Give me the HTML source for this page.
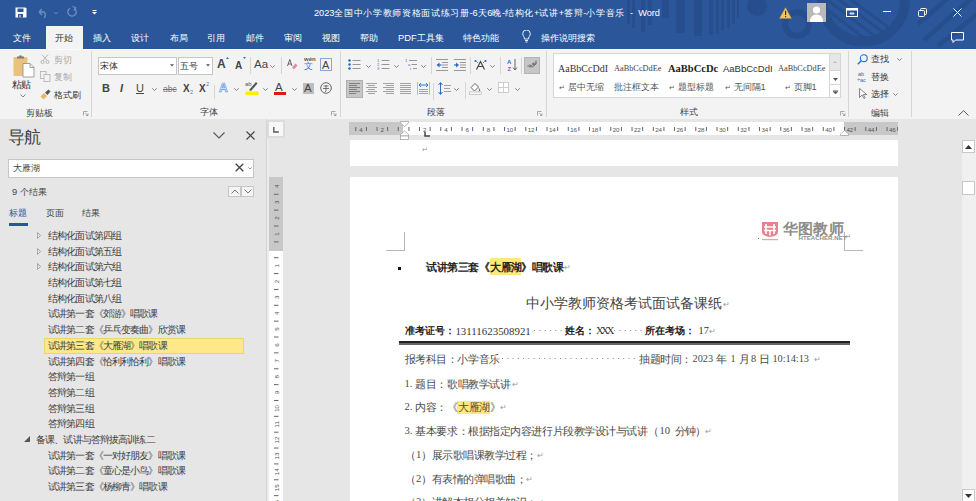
<!DOCTYPE html>
<html><head><meta charset="utf-8">
<style>
*{margin:0;padding:0;box-sizing:border-box}
i{font-style:normal;display:inline-block;width:var(--cw);font-family:"Liberation Sans",sans-serif}
html,body{width:976px;height:501px;overflow:hidden;background:#e6e6e6}
body{--cw:0.968em;position:relative;font-family:"Liberation Sans",sans-serif;font-size:9.3px;color:#444}
.a{position:absolute;white-space:nowrap}
#tb{left:0;top:0;width:976px;height:49px;background:#2b579a;overflow:hidden}
#rb{left:0;top:48px;width:976px;height:71px;background:#f3f3f3}
#nav{left:0;top:119px;width:266px;height:382px;background:#e6e6e6}
#doc{left:266px;top:119px;width:710px;height:382px;background:#e6e6e6}
.tab{top:32px;color:#fff;font-size:9.3px;line-height:12px}
.sep{width:1px;background:#d5d5d5}
.glab{top:107px;font-size:9.3px;color:#444;line-height:12px}
.ni{left:48px;font-size:9.6px;color:#3c3c3c;line-height:12px;--cw:9.125px}
.pm{color:#9a9a9a;font-size:7.5px;font-weight:normal;font-family:"Liberation Sans",sans-serif}.dots{color:#888;letter-spacing:2.6px}
.dt{--cw:10.55px;font-family:"Liberation Serif",serif;color:#4a4a4a;font-size:10.6px;line-height:13px}
</style></head><body>
<!-- TITLE BAR -->
<div id="tb" class="a">
<svg class="a" style="left:0;top:0" width="976" height="48">
<g fill="#264e8c">
<rect x="627" y="0" width="3" height="24"/><rect x="632" y="0" width="3" height="28"/>
<rect x="641" y="0" width="4" height="32"/><rect x="648" y="0" width="4" height="25"/>
<rect x="662" y="0" width="7" height="18"/><rect x="676" y="0" width="9" height="33"/>
<rect x="694" y="0" width="8" height="36"/><rect x="709" y="0" width="4" height="35"/>
<rect x="716" y="0" width="3" height="33"/><rect x="721" y="0" width="3" height="31"/>
<rect x="727" y="0" width="3" height="28"/><rect x="732" y="0" width="3" height="24"/>
<rect x="737" y="0" width="2" height="18"/>
<circle cx="757" cy="6" r="10"/>
</g>
<defs><clipPath id="cc"><circle cx="863.5" cy="0" r="37"/></clipPath></defs>
<g fill="none" stroke="#264e8c">
<circle cx="797" cy="24" r="12" stroke-width="6"/>
<circle cx="863.5" cy="0" r="41.5" stroke-width="10"/>
</g>
<g stroke="#264e8c" stroke-width="3" clip-path="url(#cc)">
<line x1="812" y1="-2" x2="864" y2="38"/><line x1="822" y1="-4" x2="876" y2="37"/>
<line x1="834" y1="-4" x2="888" y2="36"/><line x1="846" y1="-4" x2="900" y2="36"/>
</g>
<g stroke="#264e8c" stroke-width="4.5">
<line x1="948" y1="-2" x2="918" y2="24"/><line x1="972" y1="-2" x2="924" y2="40"/>
<line x1="980" y1="12" x2="938" y2="46"/>
</g>
</svg>
<!-- QAT -->
<svg class="a" style="left:15px;top:7px" width="12" height="11" viewBox="0 0 12 11"><path d="M0.5 0.5h10l1 1v9h-11z" fill="#fff"/><rect x="2.5" y="1.5" width="6" height="3.5" fill="#2b579a"/><rect x="3" y="7" width="5" height="3.5" fill="#2b579a"/><rect x="4.5" y="8" width="1" height="2" fill="#fff"/></svg>
<svg class="a" style="left:37px;top:7px" width="22" height="12" viewBox="0 0 22 12"><path d="M2 5 L5 2 M2 5 L5 8 M2 5 H7 A4 4 0 0 1 7 11" fill="none" stroke="#6f8fc0" stroke-width="1.3"/><path d="M17 5 l2 2 l2-2" fill="none" stroke="#6f8fc0" stroke-width="0.9"/></svg>
<svg class="a" style="left:66px;top:6px" width="12" height="12" viewBox="0 0 12 12"><path d="M8.5 2.5 A4.2 4.2 0 1 1 4 2.2" fill="none" stroke="#6f8fc0" stroke-width="1.3"/><path d="M6.5 0.5 L9.5 1.5 L8 4.5" fill="none" stroke="#6f8fc0" stroke-width="1.2"/></svg>
<svg class="a" style="left:92px;top:10px" width="5" height="5" viewBox="0 0 5 5"><rect x="0.5" y="0" width="4" height="1" fill="#fff"/><path d="M0 2h5l-2.5 2.5z" fill="#fff"/></svg>
<div class="a" style="left:314px;top:6px;color:#fff;font-size:9.2px;line-height:14px;--cw:9.65px">2023<i>全</i><i>国</i><i>中</i><i>小</i><i>学</i><i>教</i><i>师</i><i>资</i><i>格</i><i>面</i><i>试</i><i>练</i><i>习</i><i>册</i>-6<i>天</i>6<i>晚</i>-<i>结</i><i>构</i><i>化</i>+<i>试</i><i>讲</i>+<i>答</i><i>辩</i>-<i>小</i><i>学</i><i>音</i><i>乐</i>&nbsp;&nbsp;-&nbsp;&nbsp;Word</div>
<!-- right controls -->
<svg class="a" style="left:779px;top:7px" width="13" height="12" viewBox="0 0 13 12"><path d="M6.5 0.8 L12.3 11.3 H0.7z" fill="#f8c35a" stroke="#e0a030" stroke-width="0.6"/><rect x="6" y="3.8" width="1.2" height="4.3" fill="#333"/><rect x="6" y="9" width="1.2" height="1.2" fill="#333"/></svg>
<div class="a" style="left:807px;top:3px;width:19px;height:19px;background:#b9b9b9"><svg class="a" style="left:0;top:0" width="19" height="19" viewBox="0 0 19 19"><circle cx="9.5" cy="7" r="3.6" fill="#fff"/><path d="M3 19 Q3 11.5 9.5 11.5 Q16 11.5 16 19z" fill="#fff"/></svg></div>
<svg class="a" style="left:846px;top:8px" width="12" height="9" viewBox="0 0 12 9"><rect x="0.5" y="0.5" width="11" height="8" fill="none" stroke="#fff" stroke-width="1"/><rect x="0.5" y="0.5" width="11" height="2" fill="#fff"/><path d="M4 5.5h4 M5.5 4l-1.5 1.5 1.5 1.5 M6.5 4l1.5 1.5-1.5 1.5" stroke="#fff" stroke-width="0.8" fill="none"/></svg>
<div class="a" style="left:883px;top:11px;width:8px;height:1px;background:#fff"></div>
<svg class="a" style="left:918px;top:8px" width="9" height="9" viewBox="0 0 9 9"><rect x="0.5" y="2.5" width="6" height="6" rx="1" fill="none" stroke="#fff"/><path d="M2.5 2.5V1.5a1 1 0 0 1 1-1h4a1 1 0 0 1 1 1v4a1 1 0 0 1-1 1h-1" fill="none" stroke="#fff"/></svg>
<svg class="a" style="left:953px;top:8px" width="9" height="9" viewBox="0 0 9 9"><path d="M0.5 0.5L8.5 8.5M8.5 0.5L0.5 8.5" stroke="#fff" stroke-width="1"/></svg>
<svg class="a" style="left:951px;top:32px" width="13" height="11" viewBox="0 0 13 11"><path d="M0.5 0.5h12v7.5h-8l-2.5 2.5v-2.5h-1.5z" fill="none" stroke="#fff" stroke-width="1"/></svg>
<!-- tabs -->
<div class="a" style="left:46px;top:26px;width:37px;height:23px;background:#f3f3f3"></div>
<div class="a tab" style="left:13px"><i>文</i><i>件</i></div>
<div class="a tab" style="left:55px;color:#333"><i>开</i><i>始</i></div>
<div class="a tab" style="left:93px"><i>插</i><i>入</i></div>
<div class="a tab" style="left:131px"><i>设</i><i>计</i></div>
<div class="a tab" style="left:170px"><i>布</i><i>局</i></div>
<div class="a tab" style="left:207px"><i>引</i><i>用</i></div>
<div class="a tab" style="left:246px"><i>邮</i><i>件</i></div>
<div class="a tab" style="left:284px"><i>审</i><i>阅</i></div>
<div class="a tab" style="left:322px"><i>视</i><i>图</i></div>
<div class="a tab" style="left:360px"><i>帮</i><i>助</i></div>
<div class="a tab" style="left:398px">PDF<i>工</i><i>具</i><i>集</i></div>
<div class="a tab" style="left:463px"><i>特</i><i>色</i><i>功</i><i>能</i></div>
<svg class="a" style="left:522px;top:30px" width="9" height="13" viewBox="0 0 9 13"><path d="M2.5 9 C2.5 6.5 0.7 5.8 0.7 3.8 A3.8 3.8 0 0 1 8.3 3.8 C8.3 5.8 6.5 6.5 6.5 9z M3 10.5h3 M3.5 12h2" fill="none" stroke="#fff" stroke-width="0.9"/></svg>
<div class="a tab" style="left:541px"><i>操</i><i>作</i><i>说</i><i>明</i><i>搜</i><i>索</i></div>
</div>
<!-- RIBBON -->
<div id="rb" class="a">
<!-- clipboard group -->
<svg class="a" style="left:13px;top:6px" width="22" height="24" viewBox="0 0 22 24"><rect x="0.5" y="3" width="14" height="19" rx="1" fill="#eac27c"/><path d="M4 4.5v-2h2.2a1.3 1.3 0 0 1 2.6 0H11v2z" fill="#7a7a7a"/><path d="M10 9.5h7l4 4v9.5h-11z" fill="#fff" stroke="#8a8a8a" stroke-width="0.8"/><path d="M17 9.5v4h4" fill="none" stroke="#8a8a8a" stroke-width="0.8"/></svg>
<div class="a" style="left:12px;top:31px;font-size:9.5px;line-height:12px;color:#333"><i>粘</i><i>贴</i></div>
<svg class="a" style="left:20px;top:46px" width="6" height="4" viewBox="0 0 6 4"><path d="M0.5 0.5l2.5 2.5 2.5-2.5" fill="none" stroke="#666" stroke-width="0.8"/></svg>
<svg class="a" style="left:40px;top:6px" width="10" height="10" viewBox="0 0 10 10"><path d="M2 0.5L7 6.5M8 0.5L3 6.5" stroke="#b0b0b0" stroke-width="0.9"/><circle cx="2.5" cy="8" r="1.6" fill="none" stroke="#b0b0b0" stroke-width="0.9"/><circle cx="7.5" cy="8" r="1.6" fill="none" stroke="#b0b0b0" stroke-width="0.9"/></svg>
<div class="a" style="left:54px;top:6px;color:#a8a8a8;line-height:12px"><i>剪</i><i>切</i></div>
<svg class="a" style="left:40px;top:23px" width="11" height="11" viewBox="0 0 11 11"><rect x="0.5" y="0.5" width="5.5" height="7" fill="#f3f3f3" stroke="#b0b0b0" stroke-width="0.8"/><rect x="4" y="3.5" width="6" height="7" fill="#f3f3f3" stroke="#b0b0b0" stroke-width="0.8"/></svg>
<div class="a" style="left:54px;top:23px;color:#a8a8a8;line-height:12px"><i>复</i><i>制</i></div>
<svg class="a" style="left:40px;top:41px" width="11" height="11" viewBox="0 0 11 11"><path d="M0.5 7.5 L4 4 L7 7 L3.5 10.5z" fill="#e8b860"/><path d="M5 3.5 L8.5 0.5 L10.5 2.5 L7.5 6z" fill="#555"/></svg>
<div class="a" style="left:54px;top:41px;color:#333;line-height:12px"><i>格</i><i>式</i><i>刷</i></div>
<div class="a glab" style="left:26px;top:59px"><i>剪</i><i>贴</i><i>板</i></div>
<svg class="a" style="left:83px;top:63px" width="6" height="5" viewBox="0 0 6 5"><path d="M0.5 4.5v-4h4M2 2l3 2.5M5 2.5v2h-2" fill="none" stroke="#888" stroke-width="0.7"/></svg>
<div class="a sep" style="left:91px;top:3px;height:66px"></div>
<!-- font group -->
<div class="a" style="left:98px;top:9px;width:79px;height:18px;background:#fff;border:1px solid #c6c6c6"></div>
<div class="a" style="left:100px;top:12px;color:#333;line-height:12px"><i>宋</i><i>体</i></div>
<svg class="a" style="left:170px;top:16px" width="4" height="3" viewBox="0 0 4 3"><path d="M0 0.3h4l-2 2.2z" fill="#555"/></svg>
<div class="a" style="left:178px;top:9px;width:35px;height:18px;background:#fff;border:1px solid #c6c6c6"></div>
<div class="a" style="left:180px;top:12px;color:#333;line-height:12px"><i>五</i><i>号</i></div>
<svg class="a" style="left:206px;top:16px" width="4" height="3" viewBox="0 0 4 3"><path d="M0 0.3h4l-2 2.2z" fill="#555"/></svg>
<div class="a" style="left:217px;top:10px;font-size:12px;line-height:13px;color:#444;font-weight:bold">A</div>
<svg class="a" style="left:226px;top:9px" width="3" height="2" viewBox="0 0 3 2"><path d="M0 2l1.5-2 1.5 2z" fill="#2b6cc4"/></svg>
<div class="a" style="left:235px;top:12px;font-size:10px;line-height:12px;color:#444;font-weight:bold">A</div>
<svg class="a" style="left:243px;top:9px" width="3" height="2" viewBox="0 0 3 2"><path d="M0 0h3l-1.5 2z" fill="#2b6cc4"/></svg>
<div class="a sep" style="left:250px;top:9px;height:17px"></div>
<div class="a" style="left:254px;top:10px;font-size:11.5px;line-height:13px;color:#444">Aa</div>
<svg class="a" style="left:270px;top:17px" width="5" height="3" viewBox="0 0 5 3"><path d="M0.3 0.3l2.2 2.2 2.2-2.2" fill="none" stroke="#666" stroke-width="0.8"/></svg>
<div class="a sep" style="left:281px;top:9px;height:17px"></div>
<svg class="a" style="left:287px;top:11px" width="11" height="11" viewBox="0 0 11 11"><path d="M0.5 7L2.8 0.5L5 7M1.3 5h3" fill="none" stroke="#555" stroke-width="0.9"/><path d="M5 8.5L8.5 4.5L10.5 6.5L7 10.5z" fill="#e68a9a"/></svg>
<div class="a" style="left:304px;top:8px;font-size:6px;line-height:6px;color:#555;font-weight:bold">wén</div>
<div class="a" style="left:304px;top:14px;font-size:9px;line-height:9px;color:#3a7bd5"><i>文</i></div>
<div class="a" style="left:320px;top:10px;width:12px;height:13px;border:1px solid #8aa8d0"></div>
<div class="a" style="left:322px;top:11px;font-size:11px;line-height:12px;color:#444">A</div>
<!-- row2 font -->
<div class="a" style="left:102px;top:34px;font-size:11px;line-height:12px;color:#444;font-weight:bold">B</div>
<div class="a" style="left:120px;top:34px;font-size:11px;line-height:12px;color:#444;font-style:italic;font-weight:bold">I</div>
<div class="a" style="left:136px;top:34px;font-size:11px;line-height:12px;color:#444;text-decoration:underline">U</div>
<svg class="a" style="left:152px;top:40px" width="5" height="3" viewBox="0 0 5 3"><path d="M0.3 0.3l2.2 2.2 2.2-2.2" fill="none" stroke="#666" stroke-width="0.8"/></svg>
<div class="a" style="left:163px;top:36px;font-size:8.5px;line-height:10px;color:#777;text-decoration:line-through">abc</div>
<div class="a" style="left:183px;top:35px;font-size:10px;line-height:11px;color:#444;font-weight:bold">X</div>
<div class="a" style="left:190px;top:41px;font-size:5.5px;line-height:6px;color:#3a7bd5">2</div>
<div class="a" style="left:199px;top:35px;font-size:10px;line-height:11px;color:#444;font-weight:bold">X</div>
<div class="a" style="left:206px;top:33px;font-size:5.5px;line-height:6px;color:#3a7bd5">2</div>
<div class="a sep" style="left:214px;top:37px;height:14px"></div>
<div class="a" style="left:219px;top:34px;font-size:12px;line-height:13px;color:#eef4fc;-webkit-text-stroke:0.7px #5a94dc;font-weight:bold">A</div>
<svg class="a" style="left:234px;top:40px" width="5" height="3" viewBox="0 0 5 3"><path d="M0.3 0.3l2.2 2.2 2.2-2.2" fill="none" stroke="#666" stroke-width="0.8"/></svg>
<svg class="a" style="left:245px;top:32px" width="14" height="16" viewBox="0 0 14 16"><text x="0" y="6" font-size="6" fill="#555" font-family="Liberation Sans">ab</text><path d="M4 10L11 2L12.5 3.5L6 11z" fill="#555"/><rect x="0.5" y="11.5" width="13" height="3.5" fill="#ffee00"/></svg>
<svg class="a" style="left:263px;top:40px" width="5" height="3" viewBox="0 0 5 3"><path d="M0.3 0.3l2.2 2.2 2.2-2.2" fill="none" stroke="#666" stroke-width="0.8"/></svg>
<div class="a" style="left:275px;top:33px;font-size:11.5px;line-height:12px;color:#444">A</div>
<div class="a" style="left:274px;top:44px;width:12px;height:3px;background:#e0161d"></div>
<svg class="a" style="left:292px;top:40px" width="5" height="3" viewBox="0 0 5 3"><path d="M0.3 0.3l2.2 2.2 2.2-2.2" fill="none" stroke="#666" stroke-width="0.8"/></svg>
<div class="a" style="left:303px;top:35px;width:11px;height:11px;background:#bdbdbd"></div>
<div class="a" style="left:304px;top:34px;font-size:11.5px;line-height:13px;color:#444">A</div>
<svg class="a" style="left:320px;top:34px" width="12" height="12" viewBox="0 0 12 12"><circle cx="6" cy="6" r="5.3" fill="none" stroke="#555" stroke-width="0.9"/><path d="M3.5 4h5M3 6.5h6M6 3v6M5 9.5h1" fill="none" stroke="#555" stroke-width="0.8"/></svg>
<div class="a glab" style="left:200px;top:58px"><i>字</i><i>体</i></div>
<svg class="a" style="left:331px;top:63px" width="6" height="5" viewBox="0 0 6 5"><path d="M0.5 4.5v-4h4M2 2l3 2.5M5 2.5v2h-2" fill="none" stroke="#888" stroke-width="0.7"/></svg>
<div class="a sep" style="left:340px;top:3px;height:66px"></div>
<!-- paragraph group row1 -->
<svg class="a" style="left:348px;top:11px" width="13" height="11" viewBox="0 0 13 11"><g fill="#2b6cc4"><circle cx="1.5" cy="1.5" r="1.3"/><circle cx="1.5" cy="5.5" r="1.3"/><circle cx="1.5" cy="9.5" r="1.3"/></g><g stroke="#8c8c8c" stroke-width="0.9"><path d="M4.5 1.5h8M4.5 5.5h8M4.5 9.5h8"/></g></svg>
<svg class="a" style="left:366px;top:17px" width="5" height="3" viewBox="0 0 5 3"><path d="M0.3 0.3l2.2 2.2 2.2-2.2" fill="none" stroke="#666" stroke-width="0.8"/></svg>
<svg class="a" style="left:377px;top:11px" width="13" height="11" viewBox="0 0 13 11"><g fill="#2b6cc4" font-size="4" font-family="Liberation Sans"><text x="0" y="3">1</text><text x="0" y="7">2</text><text x="0" y="11">3</text></g><g stroke="#8c8c8c" stroke-width="0.9"><path d="M4.5 1.5h8M4.5 5.5h8M4.5 9.5h8"/></g></svg>
<svg class="a" style="left:394px;top:17px" width="5" height="3" viewBox="0 0 5 3"><path d="M0.3 0.3l2.2 2.2 2.2-2.2" fill="none" stroke="#666" stroke-width="0.8"/></svg>
<svg class="a" style="left:405px;top:11px" width="13" height="11" viewBox="0 0 13 11"><g fill="#2b6cc4" font-size="4" font-family="Liberation Sans"><text x="0" y="3">1</text><text x="3" y="7">a</text><text x="5" y="11">i</text></g><g stroke="#8c8c8c" stroke-width="0.9"><path d="M4 1.5h8M6.5 5.5h5.5M8 9.5h4"/></g></svg>
<svg class="a" style="left:421px;top:17px" width="5" height="3" viewBox="0 0 5 3"><path d="M0.3 0.3l2.2 2.2 2.2-2.2" fill="none" stroke="#666" stroke-width="0.8"/></svg>
<div class="a sep" style="left:431px;top:9px;height:17px"></div>
<svg class="a" style="left:436px;top:11px" width="12" height="12" viewBox="0 0 12 12"><g stroke="#8c8c8c" stroke-width="0.9"><path d="M0 0.5h12M6 3.5h6M6 6h6M6 8.5h6M0 11.5h12"/></g><path d="M0.5 6l3-2.5v5z" fill="#2b6cc4"/><path d="M3 6h2.5" stroke="#2b6cc4" stroke-width="1.2"/></svg>
<svg class="a" style="left:454px;top:11px" width="12" height="12" viewBox="0 0 12 12"><g stroke="#8c8c8c" stroke-width="0.9"><path d="M0 0.5h12M6 3.5h6M6 6h6M6 8.5h6M0 11.5h12"/></g><path d="M5 6l-3-2.5v5z" fill="#2b6cc4"/><path d="M0 6h2.5" stroke="#2b6cc4" stroke-width="1.2"/></svg>
<div class="a sep" style="left:470px;top:9px;height:17px"></div>
<svg class="a" style="left:474px;top:11px" width="13" height="11" viewBox="0 0 13 11"><path d="M2.5 10.5L6.5 2.5L10.5 10.5M4 7.5h5" fill="none" stroke="#444" stroke-width="1.2"/><circle cx="1.5" cy="2" r="1.1" fill="#2b6cc4"/><circle cx="11.5" cy="2" r="1.1" fill="#2b6cc4"/><path d="M2.5 2.5l1.5 1.5M10.5 2.5l-1.5 1.5" stroke="#2b6cc4" stroke-width="0.8"/></svg>
<svg class="a" style="left:490px;top:17px" width="5" height="3" viewBox="0 0 5 3"><path d="M0.3 0.3l2.2 2.2 2.2-2.2" fill="none" stroke="#666" stroke-width="0.8"/></svg>
<div class="a sep" style="left:500px;top:9px;height:17px"></div>
<svg class="a" style="left:507px;top:10px" width="11" height="13" viewBox="0 0 11 13"><text x="0" y="5.5" font-size="6" font-weight="bold" fill="#2b6cc4" font-family="Liberation Sans">A</text><text x="0.5" y="12.5" font-size="6" font-weight="bold" fill="#9b4fc0" font-family="Liberation Sans">Z</text><path d="M8 1v11M6 9.5l2 2.5 2-2.5" fill="none" stroke="#555" stroke-width="0.9"/></svg>
<div class="a sep" style="left:521px;top:9px;height:17px"></div>
<div class="a" style="left:524px;top:9px;width:16px;height:17px;background:#c6c6c6;border:1px solid #b3b3b3"></div>
<svg class="a" style="left:527px;top:12px" width="10" height="10" viewBox="0 0 10 10"><path d="M0.5 6h4M3 4.5l1.5 1.5L3 7.5" fill="none" stroke="#555" stroke-width="0.9"/><path d="M9 0.5v3.5h-3.5M7 2.5l-1.5 1.5 1.5 1.5M5 7.5L8.5 4" fill="none" stroke="#555" stroke-width="0.9"/></svg>
<!-- paragraph row2 -->
<div class="a" style="left:346px;top:32px;width:17px;height:18px;background:#c6c6c6;border:1px solid #b0b0b0"></div>
<svg class="a" style="left:349px;top:35px" width="11" height="11" viewBox="0 0 11 11"><g stroke="#777" stroke-width="0.9"><path d="M0 0.5h11M0 2.5h8M0 4.5h11M0 6.5h8M0 8.5h11M0 10.5h7"/></g></svg>
<svg class="a" style="left:366px;top:35px" width="11" height="11" viewBox="0 0 11 11"><g stroke="#999" stroke-width="0.9"><path d="M0 0.5h11M2 2.5h7M0 4.5h11M2 6.5h7M0 8.5h11M2 10.5h7"/></g></svg>
<svg class="a" style="left:383px;top:35px" width="11" height="11" viewBox="0 0 11 11"><g stroke="#999" stroke-width="0.9"><path d="M0 0.5h11M3 2.5h8M0 4.5h11M3 6.5h8M0 8.5h11M3 10.5h8"/></g></svg>
<svg class="a" style="left:400px;top:35px" width="11" height="11" viewBox="0 0 11 11"><g stroke="#999" stroke-width="0.9"><path d="M0 0.5h11M0 2.5h11M0 4.5h11M0 6.5h11M0 8.5h11M0 10.5h11"/></g></svg>
<svg class="a" style="left:417px;top:34px" width="13" height="13" viewBox="0 0 13 13"><path d="M0.5 0v13M12.5 0v13" stroke="#9bb8e0" stroke-width="0.9"/><path d="M2 3h9M2 3l2-2M2 3l2 2M11 3l-2-2M11 3l-2 2" fill="none" stroke="#2b6cc4" stroke-width="0.9"/><g stroke="#999" stroke-width="0.9"><path d="M2 7.5h9M2 9.5h9M2 11.5h9"/></g></svg>
<div class="a sep" style="left:433px;top:35px;height:17px"></div>
<svg class="a" style="left:438px;top:34px" width="13" height="13" viewBox="0 0 13 13"><path d="M2.5 1v11M0.5 3l2-2.5 2 2.5M0.5 10l2 2.5 2-2.5" fill="none" stroke="#2b6cc4" stroke-width="1"/><g stroke="#999" stroke-width="0.9"><path d="M6 3.5h7M6 6.5h6M6 9.5h7"/></g></svg>
<svg class="a" style="left:454px;top:40px" width="5" height="3" viewBox="0 0 5 3"><path d="M0.3 0.3l2.2 2.2 2.2-2.2" fill="none" stroke="#666" stroke-width="0.8"/></svg>
<div class="a sep" style="left:465px;top:34px;height:17px"></div>
<svg class="a" style="left:469px;top:33px" width="13" height="14" viewBox="0 0 13 14"><path d="M2 6.5L6 2.5L9.5 6L5.5 10z" fill="#fff" stroke="#555" stroke-width="0.9"/><path d="M10 7.5q1.5 2 0 3" fill="#2b6cc4" stroke="#2b6cc4" stroke-width="0.9"/><rect x="0.5" y="11" width="12" height="2.5" fill="#fff" stroke="#aaa" stroke-width="0.6"/></svg>
<svg class="a" style="left:487px;top:40px" width="5" height="3" viewBox="0 0 5 3"><path d="M0.3 0.3l2.2 2.2 2.2-2.2" fill="none" stroke="#666" stroke-width="0.8"/></svg>
<svg class="a" style="left:498px;top:34px" width="11" height="11" viewBox="0 0 11 11"><rect x="0.5" y="0.5" width="10" height="10" fill="#fff" stroke="#c8c8c8" stroke-width="0.9"/><path d="M5.5 0.5v10M0.5 5.5h10" stroke="#c8c8c8" stroke-width="0.9"/></svg>
<svg class="a" style="left:515px;top:40px" width="5" height="3" viewBox="0 0 5 3"><path d="M0.3 0.3l2.2 2.2 2.2-2.2" fill="none" stroke="#666" stroke-width="0.8"/></svg>
<div class="a glab" style="left:427px;top:58px"><i>段</i><i>落</i></div>
<svg class="a" style="left:537px;top:63px" width="6" height="5" viewBox="0 0 6 5"><path d="M0.5 4.5v-4h4M2 2l3 2.5M5 2.5v2h-2" fill="none" stroke="#888" stroke-width="0.7"/></svg>
<div class="a sep" style="left:546px;top:3px;height:66px"></div>
<!-- styles gallery -->
<div class="a" style="left:553px;top:5px;width:288px;height:45px;background:#fff;border:1px solid #d6d6d6"></div>
<div class="a" style="left:558px;top:15px;font-family:'Liberation Serif',serif;font-size:10px;line-height:12px;color:#333">AaBbCcDdI</div>
<div class="a" style="left:559px;top:33px;color:#555;line-height:12px"><span style="font-size:7px">↵</span> <i>居</i><i>中</i><i>无</i><i>缩</i></div>
<div class="a" style="left:614px;top:16px;font-family:'Liberation Serif',serif;font-size:8.3px;line-height:10px;color:#444">AaBbCcDdEe</div>
<div class="a" style="left:614px;top:33px;color:#555;line-height:12px"><i>批</i><i>注</i><i>框</i><i>文</i><i>本</i></div>
<div class="a" style="left:668px;top:15px;font-family:'Liberation Serif',serif;font-size:10.5px;line-height:12px;color:#222;font-weight:bold">AaBbCcDc</div>
<div class="a" style="left:669px;top:33px;color:#555;line-height:12px"><span style="font-size:7px">↵</span> <i>题</i><i>型</i><i>标</i><i>题</i></div>
<div class="a" style="left:723px;top:15px;font-size:9.5px;line-height:12px;color:#333">AaBbCcDdI</div>
<div class="a" style="left:725px;top:33px;color:#555;line-height:12px"><span style="font-size:7px">↵</span> <i>无</i><i>间</i><i>隔</i>1</div>
<div class="a" style="left:778px;top:16px;font-family:'Liberation Serif',serif;font-size:8.3px;line-height:10px;color:#444">AaBbCcDdEe</div>
<div class="a" style="left:785px;top:33px;color:#555;line-height:12px"><span style="font-size:7px">↵</span> <i>页</i><i>脚</i>1</div>
<div class="a" style="left:829px;top:5px;width:12px;height:45px;background:#fff;border:1px solid #d6d6d6"></div>
<div class="a" style="left:830px;top:6px;width:10px;height:16px;background:#e6e6e6"></div>
<svg class="a" style="left:833px;top:13px" width="4" height="2" viewBox="0 0 4 2"><path d="M0 2l2-2 2 2z" fill="#bbb"/></svg>
<div class="a" style="left:830px;top:22px;width:10px;height:1px;background:#d6d6d6"></div>
<svg class="a" style="left:833px;top:30px" width="5" height="3" viewBox="0 0 5 3"><path d="M0 0h5l-2.5 3z" fill="#555"/></svg>
<div class="a" style="left:830px;top:36px;width:10px;height:1px;background:#d6d6d6"></div>
<svg class="a" style="left:833px;top:42px" width="5" height="4" viewBox="0 0 5 4"><path d="M0 0.5h5M0 1.5h5l-2.5 2.5z" fill="#555" stroke="#555" stroke-width="0.5"/></svg>
<div class="a glab" style="left:680px;top:58px"><i>样</i><i>式</i></div>
<svg class="a" style="left:840px;top:63px" width="6" height="5" viewBox="0 0 6 5"><path d="M0.5 4.5v-4h4M2 2l3 2.5M5 2.5v2h-2" fill="none" stroke="#888" stroke-width="0.7"/></svg>
<div class="a sep" style="left:848px;top:3px;height:66px"></div>
<!-- editing -->
<svg class="a" style="left:857px;top:6px" width="11" height="11" viewBox="0 0 11 11"><circle cx="6.8" cy="4.2" r="3.4" fill="none" stroke="#2b6cc4" stroke-width="1.1"/><path d="M4.5 6.5L0.8 10.2" stroke="#2b6cc4" stroke-width="1.4"/></svg>
<div class="a" style="left:871px;top:5px;color:#333;line-height:12px"><i>查</i><i>找</i></div>
<svg class="a" style="left:897px;top:10px" width="5" height="3" viewBox="0 0 5 3"><path d="M0.3 0.3l2.2 2.2 2.2-2.2" fill="none" stroke="#666" stroke-width="0.8"/></svg>
<svg class="a" style="left:857px;top:23px" width="12" height="12" viewBox="0 0 12 12"><text x="1" y="5" font-size="5.5" fill="#6a4fb0" font-family="Liberation Sans">ab</text><text x="3" y="11" font-size="5.5" fill="#2b6cc4" font-family="Liberation Sans">ac</text><path d="M0.5 8.5h2M1.5 7.5l1 1-1 1" stroke="#2b6cc4" stroke-width="0.6" fill="none"/></svg>
<div class="a" style="left:871px;top:23px;color:#333;line-height:12px"><i>替</i><i>换</i></div>
<svg class="a" style="left:859px;top:40px" width="9" height="11" viewBox="0 0 9 11"><path d="M0.5 0.5v9l2.5-2.5 2 3.5 1.2-0.7-2-3.3h3.5z" fill="#fff" stroke="#666" stroke-width="0.8"/></svg>
<div class="a" style="left:871px;top:40px;color:#333;line-height:12px"><i>选</i><i>择</i></div>
<svg class="a" style="left:893px;top:45px" width="5" height="3" viewBox="0 0 5 3"><path d="M0.3 0.3l2.2 2.2 2.2-2.2" fill="none" stroke="#666" stroke-width="0.8"/></svg>
<div class="a glab" style="left:871px;top:59px"><i>编</i><i>辑</i></div>
<div class="a sep" style="left:911px;top:3px;height:66px"></div>
<svg class="a" style="left:958px;top:62px" width="11" height="6" viewBox="0 0 11 6"><path d="M0.5 5.5L5.5 0.7L10.5 5.5" fill="none" stroke="#555" stroke-width="1"/></svg>
</div>
<div class="a" style="left:0;top:48px;width:46px;height:1px;background:#2b579a"></div>
<div class="a" style="left:83px;top:48px;width:893px;height:1px;background:#2b579a"></div>
<div class="a" style="left:0;top:49px;width:976px;height:1px;background:#fafafa"></div>
<!-- NAV -->
<div id="nav" class="a">
<div class="a" style="left:8px;top:7.5px;font-size:16.8px;line-height:22px;color:#444;--cw:16.2px"><i>导</i><i>航</i></div>
<svg class="a" style="left:213px;top:13px" width="12" height="7" viewBox="0 0 12 7"><path d="M0.5 0.5L6 6L11.5 0.5" fill="none" stroke="#555" stroke-width="1.1"/></svg>
<svg class="a" style="left:246px;top:12px" width="9" height="9" viewBox="0 0 9 9"><path d="M0.5 0.5L8.5 8.5M8.5 0.5L0.5 8.5" stroke="#444" stroke-width="1.1"/></svg>
<div class="a" style="left:8px;top:40px;width:246px;height:19px;background:#fff;border:1px solid #c6c6c6"></div>
<div class="a" style="left:13px;top:43px;color:#444;line-height:12px"><i>大</i><i>雁</i><i>湖</i></div>
<svg class="a" style="left:235px;top:44px" width="9" height="9" viewBox="0 0 9 9"><path d="M0.7 0.7L8.3 8.3M8.3 0.7L0.7 8.3" stroke="#444" stroke-width="1.3"/></svg>
<svg class="a" style="left:248px;top:48px" width="4" height="3" viewBox="0 0 4 3"><path d="M0.3 0.3l1.7 1.7 1.7-1.7" fill="none" stroke="#666" stroke-width="0.7"/></svg>
<div class="a" style="left:12px;top:67px;color:#444;line-height:12px">9 <i>个</i><i>结</i><i>果</i></div>
<div class="a" style="left:228px;top:67px;width:13px;height:11px;background:#f4f4f4;border:1px solid #c6c6c6"></div>
<div class="a" style="left:241px;top:67px;width:13px;height:11px;background:#f4f4f4;border:1px solid #c6c6c6"></div>
<svg class="a" style="left:231px;top:70px" width="8" height="5" viewBox="0 0 8 5"><path d="M0.5 4.5L4 1L7.5 4.5" fill="none" stroke="#666" stroke-width="0.9"/></svg>
<svg class="a" style="left:244px;top:70px" width="8" height="5" viewBox="0 0 8 5"><path d="M0.5 0.5L4 4L7.5 0.5" fill="none" stroke="#666" stroke-width="0.9"/></svg>
<div class="a" style="left:9px;top:88px;color:#2b579a;line-height:12px"><i>标</i><i>题</i></div>
<div class="a" style="left:9px;top:104px;width:19px;height:3px;background:#2b579a"></div>
<div class="a" style="left:46px;top:88px;color:#444;line-height:12px"><i>页</i><i>面</i></div>
<div class="a" style="left:82px;top:88px;color:#444;line-height:12px"><i>结</i><i>果</i></div>
<svg class="a" style="left:37px;top:113px" width="4" height="7" viewBox="0 0 4 7"><path d="M0.4 0.5L3.6 3.5L0.4 6.5z" fill="none" stroke="#888" stroke-width="0.7"/></svg>
<svg class="a" style="left:37px;top:129px" width="4" height="7" viewBox="0 0 4 7"><path d="M0.4 0.5L3.6 3.5L0.4 6.5z" fill="none" stroke="#888" stroke-width="0.7"/></svg>
<svg class="a" style="left:37px;top:144px" width="4" height="7" viewBox="0 0 4 7"><path d="M0.4 0.5L3.6 3.5L0.4 6.5z" fill="none" stroke="#888" stroke-width="0.7"/></svg>
<div class="a" style="left:44px;top:219px;width:200px;height:16px;background:#ffe88a;border:1px solid #eed46a"></div>
<div class="a ni" style="top:111px"><i>结</i><i>构</i><i>化</i><i>面</i><i>试</i><i>第</i><i>四</i><i>组</i></div>
<div class="a ni" style="top:127px"><i>结</i><i>构</i><i>化</i><i>面</i><i>试</i><i>第</i><i>五</i><i>组</i></div>
<div class="a ni" style="top:142px"><i>结</i><i>构</i><i>化</i><i>面</i><i>试</i><i>第</i><i>六</i><i>组</i></div>
<div class="a ni" style="top:158px"><i>结</i><i>构</i><i>化</i><i>面</i><i>试</i><i>第</i><i>七</i><i>组</i></div>
<div class="a ni" style="top:174px"><i>结</i><i>构</i><i>化</i><i>面</i><i>试</i><i>第</i><i>八</i><i>组</i></div>
<div class="a ni" style="top:189px"><i>试</i><i>讲</i><i>第</i><i>一</i><i>套</i><i>《</i><i>郊</i><i>游</i><i>》</i><i>唱</i><i>歌</i><i>课</i></div>
<div class="a ni" style="top:205px"><i>试</i><i>讲</i><i>第</i><i>二</i><i>套</i><i>《</i><i>乒</i><i>乓</i><i>变</i><i>奏</i><i>曲</i><i>》</i><i>欣</i><i>赏</i><i>课</i></div>
<div class="a ni" style="top:221px"><i>试</i><i>讲</i><i>第</i><i>三</i><i>套</i><i>《</i><i>大</i><i>雁</i><i>湖</i><i>》</i><i>唱</i><i>歌</i><i>课</i></div>
<div class="a ni" style="top:237px"><i>试</i><i>讲</i><i>第</i><i>四</i><i>套</i><i>《</i><i>恰</i><i>利</i><i>利</i><i>恰</i><i>利</i><i>》</i><i>唱</i><i>歌</i><i>课</i></div>
<div class="a ni" style="top:252px"><i>答</i><i>辩</i><i>第</i><i>一</i><i>组</i></div>
<div class="a ni" style="top:268px"><i>答</i><i>辩</i><i>第</i><i>二</i><i>组</i></div>
<div class="a ni" style="top:284px"><i>答</i><i>辩</i><i>第</i><i>三</i><i>组</i></div>
<div class="a ni" style="top:299px"><i>答</i><i>辩</i><i>第</i><i>四</i><i>组</i></div>
<svg class="a" style="left:24px;top:317px" width="6" height="6" viewBox="0 0 6 6"><path d="M6 0V6H0z" fill="#555"/></svg>
<div class="a ni" style="left:36px;top:315px"><i>备</i><i>课</i><i>、</i><i>试</i><i>讲</i><i>与</i><i>答</i><i>辩</i><i>拔</i><i>高</i><i>训</i><i>练</i><i>二</i></div>
<div class="a ni" style="top:331px"><i>试</i><i>讲</i><i>第</i><i>一</i><i>套</i><i>《</i><i>一</i><i>对</i><i>好</i><i>朋</i><i>友</i><i>》</i><i>唱</i><i>歌</i><i>课</i></div>
<div class="a ni" style="top:346px"><i>试</i><i>讲</i><i>第</i><i>二</i><i>套</i><i>《</i><i>童</i><i>心</i><i>是</i><i>小</i><i>鸟</i><i>》</i><i>唱</i><i>歌</i><i>课</i></div>
<div class="a ni" style="top:362px"><i>试</i><i>讲</i><i>第</i><i>三</i><i>套</i><i>《</i><i>杨</i><i>柳</i><i>青</i><i>》</i><i>唱</i><i>歌</i><i>课</i></div>
</div>
<!-- DOC -->
<div id="doc" class="a">
<div class="a" style="left:0;top:0;width:1px;height:382px;background:#d4d4d4"></div>
<div class="a" style="left:1px;top:0;width:2px;height:382px;background:#ececec"></div>
</div>
<div class="a" style="left:267px;top:120px;width:18px;height:18px;background:#f8f8f8;border:2px solid #dcdcdc"></div>
<svg class="a" style="left:273px;top:127px" width="6" height="6" viewBox="0 0 6 6"><path d="M0.8 0v5h5" fill="none" stroke="#555" stroke-width="1.3"/></svg>
<svg class="a" style="left:349px;top:122px" width="549" height="13" viewBox="0 0 549 13"><rect x="0" y="0" width="549" height="13" fill="#fff"/><rect x="0" y="0" width="54" height="13" fill="#c8c8c8"/><rect x="495" y="0" width="54" height="13" fill="#c8c8c8"/><path d="M6.79 5V9M17.41 5V9M28.04 5V9M38.66 5V9M49.29 5V9M59.91 5V9M70.54 5V9M81.16 5V9M91.79 5V9M102.41 5V9M113.04 5V9M123.66 5V9M134.29 5V9M144.91 5V9M155.54 5V9M166.16 5V9M176.79 5V9M187.41 5V9M198.04 5V9M208.66 5V9M219.29 5V9M229.91 5V9M240.54 5V9M251.16 5V9M261.79 5V9M272.41 5V9M283.04 5V9M293.66 5V9M304.29 5V9M314.91 5V9M325.54 5V9M336.16 5V9M346.79 5V9M357.41 5V9M368.04 5V9M378.66 5V9M389.29 5V9M399.91 5V9M410.54 5V9M421.16 5V9M431.79 5V9M442.41 5V9M453.04 5V9M463.66 5V9M474.29 5V9M484.91 5V9M495.54 5V9M506.16 5V9M516.79 5V9M527.41 5V9M538.04 5V9M548.66 5V9" stroke="#666" stroke-width="1"/><g font-family="Liberation Sans" font-size="6.2" fill="#555"><text x="12.10" y="9.6" text-anchor="middle">4</text><text x="33.35" y="9.6" text-anchor="middle">2</text><text x="75.85" y="9.6" text-anchor="middle">2</text><text x="97.10" y="9.6" text-anchor="middle">4</text><text x="118.35" y="9.6" text-anchor="middle">6</text><text x="139.60" y="9.6" text-anchor="middle">8</text><text x="160.85" y="9.6" text-anchor="middle">10</text><text x="182.10" y="9.6" text-anchor="middle">12</text><text x="203.35" y="9.6" text-anchor="middle">14</text><text x="224.60" y="9.6" text-anchor="middle">16</text><text x="245.85" y="9.6" text-anchor="middle">18</text><text x="267.10" y="9.6" text-anchor="middle">20</text><text x="288.35" y="9.6" text-anchor="middle">22</text><text x="309.60" y="9.6" text-anchor="middle">24</text><text x="330.85" y="9.6" text-anchor="middle">26</text><text x="352.10" y="9.6" text-anchor="middle">28</text><text x="373.35" y="9.6" text-anchor="middle">30</text><text x="394.60" y="9.6" text-anchor="middle">32</text><text x="415.85" y="9.6" text-anchor="middle">34</text><text x="437.10" y="9.6" text-anchor="middle">36</text><text x="458.35" y="9.6" text-anchor="middle">38</text><text x="479.60" y="9.6" text-anchor="middle">40</text><text x="500.85" y="9.6" text-anchor="middle">42</text><text x="522.10" y="9.6" text-anchor="middle">44</text><text x="543.35" y="9.6" text-anchor="middle">46</text></g></svg>
<svg class="a" style="left:269px;top:177px" width="14" height="324" viewBox="0 0 14 324"><rect x="0" y="0" width="14" height="324" fill="#fff"/><rect x="0" y="0" width="14" height="74" fill="#c8c8c8"/><path d="M5 17.29H9.5M5 33.15H9.5M5 49.01H9.5M5 64.87H9.5M5 80.73H9.5M5 96.59H9.5M5 112.45H9.5M5 128.31H9.5M5 144.17H9.5M5 160.03H9.5M5 175.89H9.5M5 191.75H9.5M5 207.61H9.5M5 223.47H9.5M5 239.33H9.5M5 255.19H9.5M5 271.05H9.5M5 286.91H9.5M5 302.77H9.5M5 318.63H9.5" stroke="#666" stroke-width="1"/><g font-family="Liberation Sans" font-size="6.2" fill="#555"><text transform="translate(9.5 9.36) rotate(-90)" text-anchor="middle">4</text><text transform="translate(9.5 25.22) rotate(-90)" text-anchor="middle">3</text><text transform="translate(9.5 41.08) rotate(-90)" text-anchor="middle">2</text><text transform="translate(9.5 56.94) rotate(-90)" text-anchor="middle">1</text><text transform="translate(9.5 88.66) rotate(-90)" text-anchor="middle">1</text><text transform="translate(9.5 104.52) rotate(-90)" text-anchor="middle">2</text><text transform="translate(9.5 120.38) rotate(-90)" text-anchor="middle">3</text><text transform="translate(9.5 136.24) rotate(-90)" text-anchor="middle">4</text><text transform="translate(9.5 152.10) rotate(-90)" text-anchor="middle">5</text><text transform="translate(9.5 167.96) rotate(-90)" text-anchor="middle">6</text><text transform="translate(9.5 183.82) rotate(-90)" text-anchor="middle">7</text><text transform="translate(9.5 199.68) rotate(-90)" text-anchor="middle">8</text><text transform="translate(9.5 215.54) rotate(-90)" text-anchor="middle">9</text><text transform="translate(9.5 231.40) rotate(-90)" text-anchor="middle">10</text><text transform="translate(9.5 247.26) rotate(-90)" text-anchor="middle">11</text><text transform="translate(9.5 263.12) rotate(-90)" text-anchor="middle">12</text><text transform="translate(9.5 278.98) rotate(-90)" text-anchor="middle">13</text><text transform="translate(9.5 294.84) rotate(-90)" text-anchor="middle">14</text><text transform="translate(9.5 310.70) rotate(-90)" text-anchor="middle">15</text><text transform="translate(9.5 326.56) rotate(-90)" text-anchor="middle">16</text></g></svg>
<!-- indent markers -->
<svg class="a" style="left:400px;top:121px" width="9" height="19" viewBox="0 0 9 19"><path d="M0.5 0.5h8v1.5L4.5 5.5L0.5 2z" fill="#fff" stroke="#999" stroke-width="0.7"/><path d="M4.5 10L8.5 13.5V15H0.5V13.5z" fill="#fff" stroke="#999" stroke-width="0.7"/><rect x="0.5" y="15" width="8" height="3.5" fill="#fff" stroke="#999" stroke-width="0.7"/></svg>
<svg class="a" style="left:424px;top:132px" width="6" height="5" viewBox="0 0 6 5"><path d="M1 0v4h5" fill="none" stroke="#444" stroke-width="1.5"/></svg>
<svg class="a" style="left:840px;top:130px" width="9" height="6" viewBox="0 0 9 6"><path d="M4.5 0.5L8.5 4V5.5H0.5V4z" fill="#fff" stroke="#999" stroke-width="0.7"/></svg>
<!-- pages -->
<div class="a" style="left:350px;top:140px;width:548px;height:26px;background:#fff"></div>
<div class="a" style="left:422px;top:146px;font-size:7px;line-height:8px;color:#999">↵</div>
<div class="a" style="left:350px;top:177px;width:548px;height:324px;background:#fff"></div>
<!-- scrollbar -->
<div class="a" style="left:962px;top:140px;width:14px;height:361px;background:#f0f0f0"></div>
<div class="a" style="left:962px;top:140px;width:13px;height:13px;background:#fff;border:1px solid #c8c8c8"></div>
<svg class="a" style="left:965px;top:145px" width="7" height="4" viewBox="0 0 7 4"><path d="M0 4L3.5 0L7 4z" fill="#333"/></svg>
<div class="a" style="left:962px;top:181px;width:13px;height:14px;background:#fff;border:1px solid #c8c8c8"></div>
<div class="a" style="left:962px;top:489px;width:13px;height:13px;background:#fff;border:1px solid #c8c8c8"></div>
<svg class="a" style="left:965px;top:494px" width="7" height="4" viewBox="0 0 7 4"><path d="M0 0L3.5 4L7 0z" fill="#333"/></svg>
<!-- page content -->
<div class="a" style="left:404px;top:232px;width:1px;height:19px;background:#b8b8b8"></div>
<div class="a" style="left:386px;top:250px;width:19px;height:1px;background:#b8b8b8"></div>
<div class="a" style="left:844px;top:232px;width:1px;height:19px;background:#b8b8b8"></div>
<div class="a" style="left:844px;top:250px;width:19px;height:1px;background:#b8b8b8"></div>
<!-- logo -->
<svg class="a" style="left:761px;top:221px" width="18" height="22" viewBox="0 0 18 22"><path d="M1 1h16v10q0 4-8 5q-8-1-8-5z" fill="#e8808f"/><path d="M5 3v10M13 3v10M3 6h12M3 9.5h12M9 9.5v5" stroke="#fff" stroke-width="1.6" fill="none"/><rect x="1" y="18" width="16" height="1.2" fill="#f0a0aa"/></svg>
<div class="a" style="left:783px;top:221px;font-size:15px;line-height:16px;color:#8c8c8c;font-weight:bold;--cw:15.2px"><i>华</i><i>图</i><i>教</i><i>师</i></div>
<svg class="a" style="left:798px;top:235px" width="50" height="5" viewBox="0 0 50 5"><text x="0.5" y="4.5" font-size="4.6" fill="#909090" font-family="Liberation Sans" font-weight="bold" textLength="48" lengthAdjust="spacingAndGlyphs">HTEACHER.NET</text></svg>
<div class="a" style="left:845px;top:233px;font-size:7px;line-height:8px;color:#888">↵</div>
<div class="a" style="left:758px;top:238px;width:1px;height:1px;background:#777"></div>
<div class="a" style="left:398px;top:267px;width:3px;height:3px;background:#111"></div>
<div class="a" style="left:490px;top:258px;width:31px;height:17px;background:#ffe87c"></div>
<div class="a dt" style="left:426px;top:260.0px;font-size:10.5px;line-height:14px;font-weight:bold;color:#222;--cw:10.5px"><i>试</i><i>讲</i><i>第</i><i>三</i><i>套</i><i>《</i></div>
<div class="a dt" style="left:490px;top:260.0px;font-size:10.5px;line-height:14px;font-weight:bold;color:#222;--cw:10.5px"><i>大</i><i>雁</i><i>湖</i></div>
<div class="a dt" style="left:521px;top:260.0px;font-size:10.5px;line-height:14px;font-weight:bold;color:#222;--cw:10.5px"><i>》</i><i>唱</i><i>歌</i><i>课</i></div>
<div class="a pm" style="left:564px;top:263.0px;line-height:9px">↵</div>
<div class="a dt" style="left:526px;top:296.0px;font-size:14px;line-height:14px;color:#444;--cw:14px"><i>中</i><i>小</i><i>学</i><i>教</i><i>师</i><i>资</i><i>格</i><i>考</i><i>试</i><i>面</i><i>试</i><i>备</i><i>课</i><i>纸</i></div>
<div class="a pm" style="left:723px;top:300.0px;line-height:9px">↵</div>
<div class="a dt" style="left:404.7px;top:323.5px;font-size:10.2px;line-height:14px;font-weight:bold;color:#222;--cw:10.14px"><i>准</i><i>考</i><i>证</i><i>号</i><i>：</i></div>
<div class="a dt" style="left:455.4px;top:323.5px;font-size:10.9px;line-height:14px;color:#333">13111623508921</div>
<svg class="a" style="left:533px;top:330px" width="35" height="2" viewBox="0 0 35 2"><g fill="#888"><rect x="1.00" y="0" width="1" height="1"/><rect x="6.30" y="0" width="1" height="1"/><rect x="11.60" y="0" width="1" height="1"/><rect x="16.90" y="0" width="1" height="1"/><rect x="22.20" y="0" width="1" height="1"/><rect x="27.50" y="0" width="1" height="1"/></g></svg>
<div class="a dt" style="left:565px;top:323.5px;font-size:10.2px;line-height:14px;font-weight:bold;color:#222;--cw:10.14px"><i>姓</i><i>名</i><i>：</i></div>
<div class="a dt" style="left:596px;top:323.5px;font-size:10.6px;line-height:14px;color:#333;letter-spacing:-2.3px">XXX</div>
<svg class="a" style="left:613px;top:330px" width="35" height="2" viewBox="0 0 35 2"><g fill="#888"><rect x="1.00" y="0" width="1" height="1"/><rect x="6.30" y="0" width="1" height="1"/><rect x="11.60" y="0" width="1" height="1"/><rect x="16.90" y="0" width="1" height="1"/><rect x="22.20" y="0" width="1" height="1"/><rect x="27.50" y="0" width="1" height="1"/></g></svg>
<div class="a dt" style="left:644.8px;top:323.5px;font-size:10.2px;line-height:14px;font-weight:bold;color:#222;--cw:10.14px"><i>所</i><i>在</i><i>考</i><i>场</i><i>：</i></div>
<div class="a dt" style="left:698.6px;top:323.5px;font-size:10.2px;line-height:14px;color:#333">17</div>
<div class="a pm" style="left:709px;top:326.5px;line-height:9px">↵</div>
<div class="a" style="left:399px;top:341px;width:451px;height:2px;background:#222"></div>
<div class="a" style="left:399px;top:343px;width:451px;height:2px;background:#666"></div>
<div class="a dt" style="left:404.7px;top:351.8px;font-size:10.55px;line-height:14px;color:#4a4a4a"><i>报</i><i>考</i><i>科</i><i>目</i><i>：</i><i>小</i><i>学</i><i>音</i><i>乐</i></div>
<svg class="a" style="left:501px;top:358px" width="141" height="2" viewBox="0 0 141 2"><g fill="#888"><rect x="1.00" y="0" width="1" height="1"/><rect x="6.27" y="0" width="1" height="1"/><rect x="11.54" y="0" width="1" height="1"/><rect x="16.81" y="0" width="1" height="1"/><rect x="22.08" y="0" width="1" height="1"/><rect x="27.35" y="0" width="1" height="1"/><rect x="32.62" y="0" width="1" height="1"/><rect x="37.89" y="0" width="1" height="1"/><rect x="43.16" y="0" width="1" height="1"/><rect x="48.43" y="0" width="1" height="1"/><rect x="53.70" y="0" width="1" height="1"/><rect x="58.97" y="0" width="1" height="1"/><rect x="64.24" y="0" width="1" height="1"/><rect x="69.51" y="0" width="1" height="1"/><rect x="74.78" y="0" width="1" height="1"/><rect x="80.05" y="0" width="1" height="1"/><rect x="85.32" y="0" width="1" height="1"/><rect x="90.59" y="0" width="1" height="1"/><rect x="95.86" y="0" width="1" height="1"/><rect x="101.13" y="0" width="1" height="1"/><rect x="106.40" y="0" width="1" height="1"/><rect x="111.67" y="0" width="1" height="1"/><rect x="116.94" y="0" width="1" height="1"/><rect x="122.21" y="0" width="1" height="1"/><rect x="127.48" y="0" width="1" height="1"/><rect x="132.75" y="0" width="1" height="1"/></g></svg>
<div class="a dt" style="left:639.2px;top:351.8px;font-size:10.6px;line-height:14px;"><i>抽</i><i>题</i><i>时</i><i>间</i><i>：</i></div>
<div class="a dt" style="left:692.5px;top:351.8px;font-size:10.3px;line-height:14px;">2023</div>
<div class="a dt" style="left:716px;top:351.8px;font-size:10.6px;line-height:14px;"><i>年</i></div>
<div class="a dt" style="left:730.4px;top:351.8px;font-size:10.3px;line-height:14px;">1</div>
<div class="a dt" style="left:738.6px;top:351.8px;font-size:10.6px;line-height:14px;"><i>月</i></div>
<div class="a dt" style="left:751px;top:351.8px;font-size:10.3px;line-height:14px;">8</div>
<div class="a dt" style="left:759px;top:351.8px;font-size:10.6px;line-height:14px;"><i>日</i></div>
<div class="a dt" style="left:772.4px;top:351.8px;font-size:10.3px;line-height:14px;">10:14:13</div>
<div class="a pm" style="left:814.4px;top:354.8px;line-height:9px">↵</div>
<div class="a dt" style="left:404.5px;top:376.5px;font-size:10.6px;line-height:14px;">1.</div>
<div class="a dt" style="left:415.4px;top:376.5px;font-size:10.55px;line-height:14px;color:#4a4a4a"><i>题</i><i>目</i><i>：</i><i>歌</i><i>唱</i><i>教</i><i>学</i><i>试</i><i>讲</i></div>
<div class="a pm" style="left:511.7px;top:379.5px;line-height:9px">↵</div>
<div class="a dt" style="left:404.5px;top:400.0px;font-size:10.6px;line-height:14px;">2.</div>
<div class="a dt" style="left:415.4px;top:400.0px;font-size:10.55px;line-height:14px;color:#4a4a4a"><i>内</i><i>容</i><i>：</i></div>
<div class="a pm" style="left:500.4px;top:403.0px;line-height:9px">↵</div>
<div class="a dt" style="left:404.5px;top:423.7px;font-size:10.6px;line-height:14px;">3.</div>
<div class="a dt" style="left:415.4px;top:423.7px;font-size:10.55px;line-height:14px;color:#4a4a4a"><i>基</i><i>本</i><i>要</i><i>求</i><i>：</i><i>根</i><i>据</i><i>指</i><i>定</i><i>内</i><i>容</i><i>进</i><i>行</i><i>片</i><i>段</i><i>教</i><i>学</i><i>设</i><i>计</i><i>与</i><i>试</i><i>讲</i></div>
<div class="a pm" style="left:705.2px;top:426.7px;line-height:9px">↵</div>
<div class="a" style="left:457.4px;top:400.5px;width:32.4px;height:13.5px;background:#ffe87c"></div>
<div class="a dt" style="left:447px;top:400.0px;font-size:10.5px;line-height:14px;"><i>《</i></div>
<div class="a dt" style="left:458px;top:400.0px;font-size:10.55px;line-height:14px;color:#4a4a4a"><i>大</i><i>雁</i><i>湖</i></div>
<div class="a dt" style="left:489.8px;top:400.0px;font-size:10.5px;line-height:14px;"><i>》</i></div>
<div class="a dt" style="left:647.6px;top:423.7px;font-size:10.5px;line-height:14px;"><i>（</i></div>
<div class="a dt" style="left:659.5px;top:423.7px;font-size:10.6px;line-height:14px;">10</div>
<div class="a dt" style="left:674.5px;top:423.7px;font-size:10.5px;line-height:14px;"><i>分</i><i>钟</i></div>
<div class="a dt" style="left:694.5px;top:423.7px;font-size:10.5px;line-height:14px;"><i>）</i></div>
<div class="a dt" style="left:404.5px;top:447.8px;font-size:10.5px;line-height:14px;"><i>（</i></div>
<div class="a dt" style="left:415.5px;top:447.8px;font-size:10.5px;line-height:14px;"></div>
<div class="a dt" style="left:416px;top:447.8px;font-size:10.6px;line-height:14px;">1</div>
<div class="a dt" style="left:421px;top:447.8px;font-size:10.5px;line-height:14px;"><i>）</i></div>
<div class="a dt" style="left:431.5px;top:447.8px;font-size:10.55px;line-height:14px;color:#4a4a4a"><i>展</i><i>示</i><i>歌</i><i>唱</i><i>课</i><i>教</i><i>学</i><i>过</i><i>程</i><i>；</i></div>
<div class="a pm" style="left:537.4px;top:450.8px;line-height:9px">↵</div>
<div class="a dt" style="left:404.5px;top:471.5px;font-size:10.5px;line-height:14px;"><i>（</i></div>
<div class="a dt" style="left:415.5px;top:471.5px;font-size:10.5px;line-height:14px;"></div>
<div class="a dt" style="left:416px;top:471.5px;font-size:10.6px;line-height:14px;">2</div>
<div class="a dt" style="left:421px;top:471.5px;font-size:10.5px;line-height:14px;"><i>）</i></div>
<div class="a dt" style="left:431.5px;top:471.5px;font-size:10.55px;line-height:14px;color:#4a4a4a"><i>有</i><i>表</i><i>情</i><i>的</i><i>弹</i><i>唱</i><i>歌</i><i>曲</i><i>；</i></div>
<div class="a pm" style="left:526px;top:474.5px;line-height:9px">↵</div>
<div class="a dt" style="left:404.5px;top:495.2px;font-size:10.5px;line-height:14px;"><i>（</i></div>
<div class="a dt" style="left:415.5px;top:495.2px;font-size:10.5px;line-height:14px;"></div>
<div class="a dt" style="left:416px;top:495.2px;font-size:10.6px;line-height:14px;">3</div>
<div class="a dt" style="left:421px;top:495.2px;font-size:10.5px;line-height:14px;"><i>）</i></div>
<div class="a dt" style="left:431.5px;top:495.2px;font-size:10.55px;line-height:14px;color:#4a4a4a"><i>讲</i><i>解</i><i>本</i><i>相</i><i>分</i><i>相</i><i>关</i><i>知</i><i>识</i><i>；</i></div>
<div class="a pm" style="left:537.4px;top:498.2px;line-height:9px">↵</div>
</body></html>
